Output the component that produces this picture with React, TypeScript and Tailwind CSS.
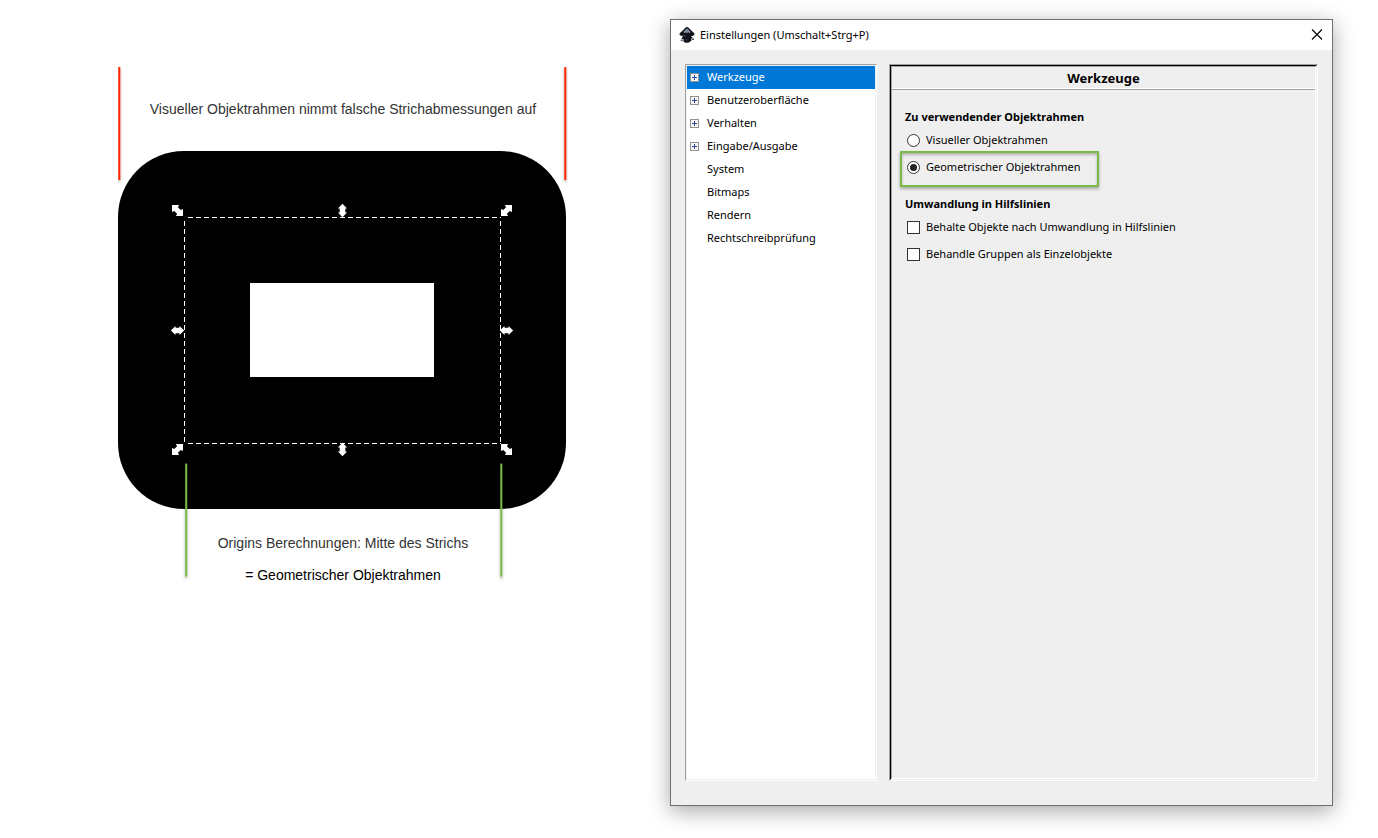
import { useState } from 'react'

const TREE = [
  { label: 'Werkzeuge', expandable: true },
  { label: 'Benutzeroberfläche', expandable: true },
  { label: 'Verhalten', expandable: true },
  { label: 'Eingabe/Ausgabe', expandable: true },
  { label: 'System', expandable: false },
  { label: 'Bitmaps', expandable: false },
  { label: 'Rendern', expandable: false },
  { label: 'Rechtschreibprüfung', expandable: false },
]

const STRAIGHT_ARROW = 'M0 -6.7L4.6 -2H2.8V2H4.6L0 6.7L-4.6 2H-2.8V-2H-4.6Z'
const DIAGONAL_ARROW = 'M0 -7.8L5 -2.8L2.6 -2V2L5 2.8L0 7.8L-5 2.8L-2.6 2V-2L-5 -2.8Z'

// Scale arrows around the selection, [x, y, rotation] of their centres
const HANDLES = [
  [59.5, 143.5, -45],
  [224.5, 143.5, 0],
  [388.5, 143.5, 45],
  [59.5, 263.5, 90],
  [388.5, 263.5, 90],
  [59.5, 382.5, 45],
  [224.5, 382.5, 0],
  [388.5, 382.5, -45],
]

const InkscapeLogo = () => (
  <svg className="h-4 w-4 shrink-0" viewBox="0 0 16 16" aria-hidden="true">
    <path d="M8 0C8.7 0 9.2 0.4 9.8 1L15 6.1C16 7.2 15.6 8.2 14.4 8.6L12 9.4C11.6 9.9 13.4 10 13.6 10.6C13.8 11.4 12 11.5 12.2 12.2C12.4 12.9 13 13.1 12.3 13.7C11.2 14.7 9.3 15.8 8 15.8C6.4 15.8 4.4 14.9 4.2 14C4.1 13.4 5 13.3 4.8 12.7C4.5 12 2.3 11.8 2.4 11C2.5 10.3 4.6 10 4 9.4L1.6 8.6C0.4 8.2 0 7.2 1 6.1L6.2 1C6.8 0.4 7.3 0 8 0Z" fill="#10131a" />
    <path d="M8 1.2L11.9 5.1L10.4 6.3L9 5L8 6.6L6.8 5.2L5.6 6.3L4.1 5.1Z" fill="#7d899c" />
    <path d="M3.2 7.8L8 9.2L5.4 9.3Z" fill="#5c6b82" />
    <path d="M6 12.2L9.5 12.8L7.5 13.4Z" fill="#3c4a63" />
    <ellipse cx="14" cy="12.3" rx="1" ry="0.7" fill="#10131a" />
    <ellipse cx="2.7" cy="13.2" rx="1" ry="0.6" fill="#10131a" />
  </svg>
)

const PlusBox = () => (
  <svg className="h-[9px] w-[9px]" viewBox="0 0 9 9" shapeRendering="crispEdges" aria-hidden="true">
    <rect x="0.5" y="0.5" width="8" height="8" fill="#f6f6f6" stroke="#919191" />
    <path d="M2 4.5H7M4.5 2V7" stroke="#2c4a9a" fill="none" />
  </svg>
)

const Drawing = () => (
  <svg className="col-start-1 row-start-1 h-[518px] w-[450px]" viewBox="0 0 450 518" aria-hidden="true">
    <defs>
      <filter id="line-shadow" x="-4" y="-0.1" width="9" height="1.2">
        <feDropShadow dx="0" dy="2" stdDeviation="1.5" floodOpacity="0.35" />
      </filter>
    </defs>
    <rect x="0" y="84" width="448" height="358" rx="66" fill="#000" />
    <rect x="132" y="216" width="184" height="94" fill="#fff" />
    <g stroke="#fff" strokeDasharray="5 3" fill="none">
      <path d="M70 150.5H383" />
      <path d="M70 376.5H383" />
      <path d="M66.5 154V377" />
      <path d="M382.5 154V377" />
    </g>
    {HANDLES.map(([x, y, angle]) => (
      <path
        key={`${x}-${y}`}
        transform={`translate(${x} ${y}) rotate(${angle})`}
        d={angle % 90 === 0 ? STRAIGHT_ARROW : DIAGONAL_ARROW}
        fill="#fff"
      />
    ))}
    <g fill="#ff2600">
      <rect x="0.3" y="0" width="2" height="113" filter="url(#line-shadow)" />
      <rect x="446.3" y="0" width="2" height="113" filter="url(#line-shadow)" />
    </g>
    <g fill="#76bb40">
      <rect x="67.2" y="396.6" width="2" height="113" filter="url(#line-shadow)" />
      <rect x="382.3" y="396.6" width="2" height="113" filter="url(#line-shadow)" />
    </g>
  </svg>
)

const optionLabel = 'flex h-[27px] w-fit items-center gap-1.5 pl-0.5'
const radioBox =
  "grid h-[13px] w-[13px] shrink-0 appearance-none place-items-center rounded-full border border-[#333] bg-white before:h-[7px] before:w-[7px] before:rounded-full checked:before:bg-[#222] checked:before:content-['']"
const checkBox = 'h-[13px] w-[13px] shrink-0 appearance-none border border-[#333] bg-white checked:bg-[#333]'

export default function App() {
  const [selected, setSelected] = useState('Werkzeuge')
  const [bbox, setBbox] = useState('geometric')

  return (
    <main className="flex min-h-screen bg-white pr-[45px] text-black">
      <figure className="ml-[118px] mr-[102px] mt-[67px] grid shrink-0 content-start font-['Liberation_Sans',Arial,sans-serif] text-sm">
        <Drawing />
        <figcaption className="col-start-1 row-start-1 flex flex-col justify-between pt-8 text-center">
          <p className="text-[#333]">Visueller Objektrahmen nimmt falsche Strichabmessungen auf</p>
          <div>
            <p className="mb-3 text-[#333]">Origins Berechnungen: Mitte des Strichs</p>
            <p>= Geometrischer Objektrahmen</p>
          </div>
        </figcaption>
      </figure>

      <section className="mb-8 mt-[19px] flex min-w-0 flex-1 flex-col border border-[#707070] bg-[#efefef] font-['Noto_Sans',sans-serif] text-[11px] shadow-[0_5px_20px_rgba(0,0,0,0.35)]">
        <header className="flex h-[30px] items-center gap-[5px] bg-white pl-2 pr-[9px]">
          <InkscapeLogo />
          <h1>Einstellungen (Umschalt+Strg+P)</h1>
          <button type="button" aria-label="Schließen" className="ml-auto">
            <svg className="h-3 w-3" viewBox="0 0 12 12" aria-hidden="true">
              <path d="M1 0.5L11 10.5M11 0.5L1 10.5" stroke="#000" strokeWidth="1.1" />
            </svg>
          </button>
        </header>

        <div className="flex flex-1 gap-3 px-3.5 pb-6 pt-3.5">
          <nav className="w-48 shrink-0 border border-b-white border-l-[#a0a0a0] border-r-white border-t-[#a0a0a0]">
            <ul className="h-full border border-[#efefef] bg-white">
              {TREE.map((item) => (
                <li key={item.label}>
                  <button
                    type="button"
                    onClick={() => setSelected(item.label)}
                    className={`flex h-[23px] w-full items-center pl-[3px] text-left ${
                      selected === item.label ? 'bg-[#0078d7] text-white' : ''
                    }`}
                  >
                    <span className="w-[17px]">{item.expandable && <PlusBox />}</span>
                    {item.label}
                  </button>
                </li>
              ))}
            </ul>
          </nav>

          <div className="min-w-0 flex-1 border border-b-white border-l-[#a0a0a0] border-r-white border-t-[#a0a0a0]">
            <div className="h-full border border-b-[#efefef] border-l-black border-r-[#efefef] border-t-black">
              <div className="h-full border border-b-white border-l-[#a0a0a0] border-r-white border-t-[#a0a0a0]">
                <div className="border-b border-white">
                  <h2 className="h-[21px] text-center text-[13px] font-bold leading-[22px]">Werkzeuge</h2>
                </div>
                <div className="border-t border-[#a0a0a0] px-[13px] pt-[17px]">
                  <fieldset>
                    <legend className="h-5 font-bold leading-5">Zu verwendender Objektrahmen</legend>
                    <label className={optionLabel}>
                      <input
                        type="radio"
                        name="bbox"
                        className={radioBox}
                        checked={bbox === 'visual'}
                        onChange={() => setBbox('visual')}
                      />
                      Visueller Objektrahmen
                    </label>
                    <div className="relative w-fit">
                      <label className={optionLabel}>
                        <input
                          type="radio"
                          name="bbox"
                          className={radioBox}
                          checked={bbox === 'geometric'}
                          onChange={() => setBbox('geometric')}
                        />
                        Geometrischer Objektrahmen
                      </label>
                      <div className="pointer-events-none absolute -bottom-1.5 -left-[5px] -top-[3px] w-[199px] border-2 border-[#7ab84a] shadow-[0_2px_3px_rgba(0,0,0,0.3),inset_0_2px_3px_rgba(0,0,0,0.25)]" />
                    </div>
                  </fieldset>
                  <fieldset className="mt-[13px]">
                    <legend className="h-5 font-bold leading-5">Umwandlung in Hilfslinien</legend>
                    <label className={optionLabel}>
                      <input type="checkbox" className={checkBox} />
                      Behalte Objekte nach Umwandlung in Hilfslinien
                    </label>
                    <label className={optionLabel}>
                      <input type="checkbox" className={checkBox} />
                      Behandle Gruppen als Einzelobjekte
                    </label>
                  </fieldset>
                </div>
              </div>
            </div>
          </div>
        </div>
      </section>
    </main>
  )
}
